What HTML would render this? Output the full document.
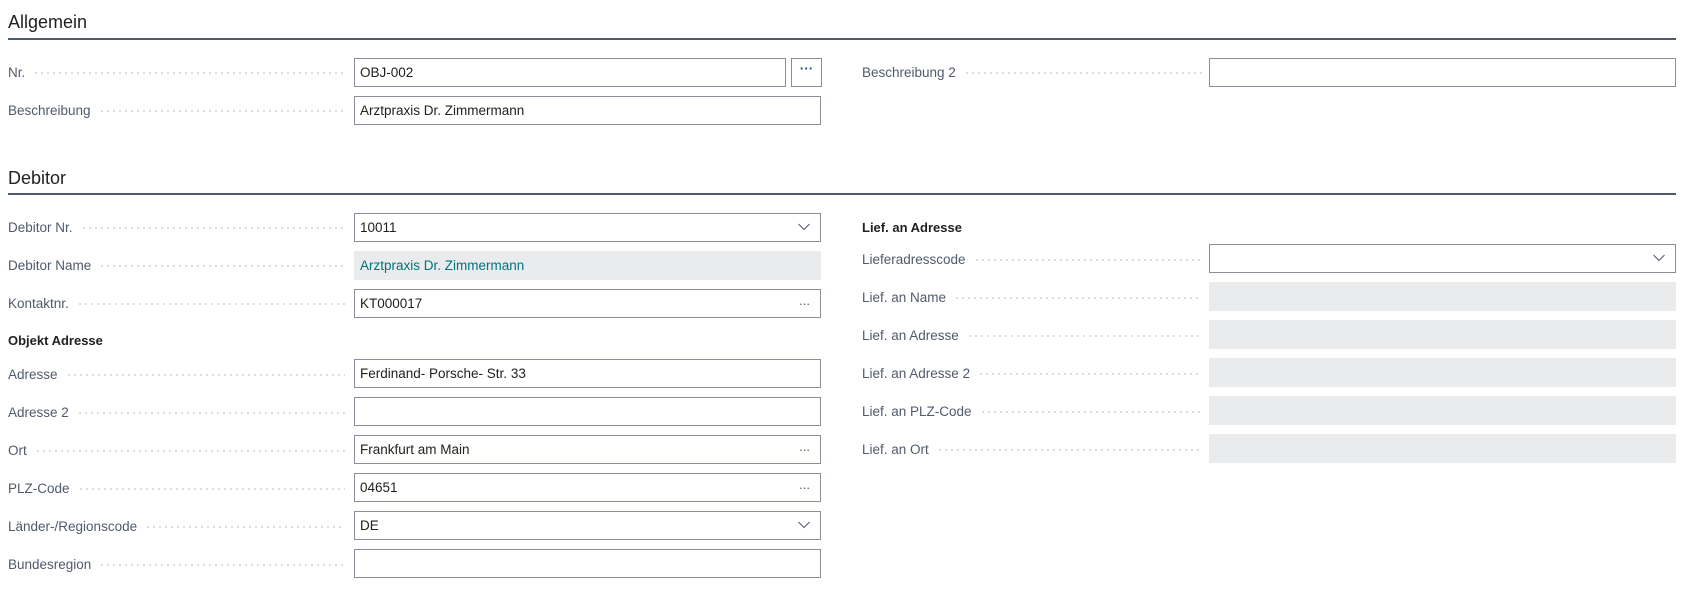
<!DOCTYPE html>
<html><head><meta charset="utf-8"><style>
*{margin:0;padding:0;box-sizing:border-box}
body{width:1687px;height:592px;background:#fff;font-family:"Liberation Sans",sans-serif;font-size:13.5px;color:#212121;position:relative;overflow:hidden}
.h{position:absolute;left:8px;font-size:18px;color:#212121}
.line{position:absolute;left:8px;width:1668px;height:2px;background:#505a6e}
.lbl{position:absolute;color:#505a6a;height:20px;line-height:20px;display:flex;align-items:center;white-space:nowrap}
.lbl .d{flex:1;height:2px;margin-left:10px;background-image:linear-gradient(90deg,#dcdcdc 2px,transparent 2px);background-size:6px 2px}
.in{position:absolute;height:29px;border:1px solid #8a8f99;background:#fff;line-height:27px;padding-left:5px;color:#212121}
.ro{position:absolute;height:29px;background:#eaebec;line-height:29px;padding-left:6px;color:#00737f}
.grp{position:absolute;font-weight:bold;color:#212121;font-size:13px}
.chev{position:absolute;right:10px;top:9px}
.dots{position:absolute;right:10px;top:-3px;color:#505a6a;font-size:13px}
.btn{position:absolute;height:29px;width:31px;border:1px solid #8a8f99;text-align:center;line-height:20px;color:#2b5797;font-weight:bold}
</style></head><body>
<div class="h" style="top:12px">Allgemein</div>
<div class="line" style="top:38px"></div>

<div class="lbl" style="left:8px;top:63px;width:337px">Nr.<span class="d"></span></div>
<div class="in" style="left:354px;top:58px;width:432px">OBJ-002</div>
<div class="btn" style="left:791px;top:58px">···</div>
<div class="lbl" style="left:8px;top:101px;width:337px">Beschreibung<span class="d"></span></div>
<div class="in" style="left:354px;top:96px;width:467px">Arztpraxis Dr. Zimmermann</div>
<div class="lbl" style="left:862px;top:63px;width:340px">Beschreibung 2<span class="d"></span></div>
<div class="in" style="left:1209px;top:58px;width:467px"></div>

<div class="h" style="top:168px">Debitor</div>
<div class="line" style="top:193px"></div>

<svg width="0" height="0" style="position:absolute"><defs><symbol id="cv" viewBox="0 0 12 8"><path d="M0.5 1L6 6.5L11.5 1" fill="none" stroke="#505a6a" stroke-width="1"/></symbol></defs></svg>

<div class="lbl" style="left:8px;top:218px;width:337px">Debitor Nr.<span class="d"></span></div>
<div class="in" style="left:354px;top:213px;width:467px">10011<svg class="chev" width="12" height="8"><use href="#cv"/></svg></div>
<div class="lbl" style="left:8px;top:256px;width:337px">Debitor Name<span class="d"></span></div>
<div class="ro" style="left:354px;top:251px;width:467px">Arztpraxis Dr. Zimmermann</div>
<div class="lbl" style="left:8px;top:294px;width:337px">Kontaktnr.<span class="d"></span></div>
<div class="in" style="left:354px;top:289px;width:467px">KT000017<span class="dots">...</span></div>
<div class="grp" style="left:8px;top:333px">Objekt Adresse</div>
<div class="lbl" style="left:8px;top:365px;width:337px">Adresse<span class="d"></span></div>
<div class="in" style="left:354px;top:359px;width:467px">Ferdinand- Porsche- Str. 33</div>
<div class="lbl" style="left:8px;top:403px;width:337px">Adresse 2<span class="d"></span></div>
<div class="in" style="left:354px;top:397px;width:467px"></div>
<div class="lbl" style="left:8px;top:441px;width:337px">Ort<span class="d"></span></div>
<div class="in" style="left:354px;top:435px;width:467px">Frankfurt am Main<span class="dots">...</span></div>
<div class="lbl" style="left:8px;top:479px;width:337px">PLZ-Code<span class="d"></span></div>
<div class="in" style="left:354px;top:473px;width:467px">04651<span class="dots">...</span></div>
<div class="lbl" style="left:8px;top:517px;width:337px">Länder-/Regionscode<span class="d"></span></div>
<div class="in" style="left:354px;top:511px;width:467px">DE<svg class="chev" width="12" height="8"><use href="#cv"/></svg></div>
<div class="lbl" style="left:8px;top:555px;width:337px">Bundesregion<span class="d"></span></div>
<div class="in" style="left:354px;top:549px;width:467px"></div>

<div class="grp" style="left:862px;top:220px">Lief. an Adresse</div>
<div class="lbl" style="left:862px;top:250px;width:340px">Lieferadresscode<span class="d"></span></div>
<div class="in" style="left:1209px;top:244px;width:467px"><svg class="chev" width="12" height="8"><use href="#cv"/></svg></div>
<div class="lbl" style="left:862px;top:288px;width:340px">Lief. an Name<span class="d"></span></div>
<div class="ro" style="left:1209px;top:282px;width:467px"></div>
<div class="lbl" style="left:862px;top:326px;width:340px">Lief. an Adresse<span class="d"></span></div>
<div class="ro" style="left:1209px;top:320px;width:467px"></div>
<div class="lbl" style="left:862px;top:364px;width:340px">Lief. an Adresse 2<span class="d"></span></div>
<div class="ro" style="left:1209px;top:358px;width:467px"></div>
<div class="lbl" style="left:862px;top:402px;width:340px">Lief. an PLZ-Code<span class="d"></span></div>
<div class="ro" style="left:1209px;top:396px;width:467px"></div>
<div class="lbl" style="left:862px;top:440px;width:340px">Lief. an Ort<span class="d"></span></div>
<div class="ro" style="left:1209px;top:434px;width:467px"></div>
</body></html>
